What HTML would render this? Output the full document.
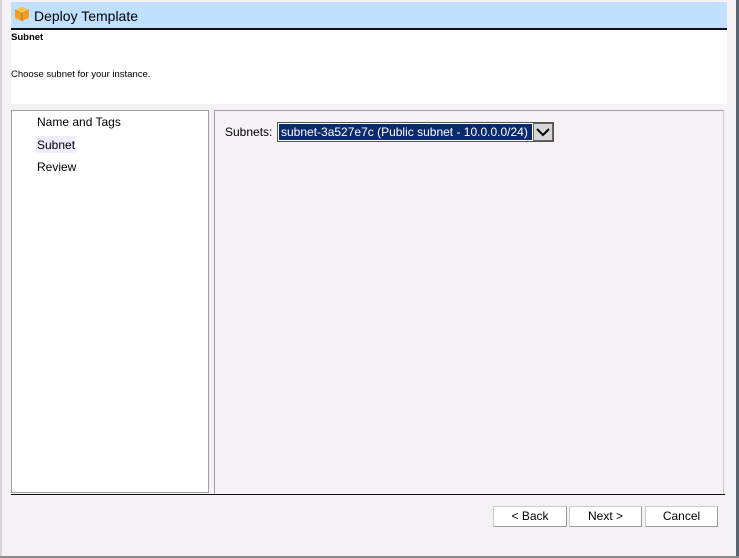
<!DOCTYPE html>
<html><head><style>
body{margin:0;width:739px;height:558px;background:#f5f1f5;position:relative;overflow:hidden;font-family:"Segoe UI","Liberation Sans",sans-serif;font-size:12px;color:#000}
div{position:absolute;box-sizing:border-box}
</style></head><body>
<div style="left:0;top:0;width:2px;height:558px;background:#d8d5d8"></div>
<div style="left:736px;top:0;width:3px;height:558px;background:#5a6470"></div>
<div style="left:0;top:556px;width:739px;height:2px;background:#8a8a8a"></div>
<div style="left:11px;top:2px;width:716px;height:27px;background:#bfe0fe"></div>
<div style="left:11px;top:28px;width:716px;height:2px;background:#111"></div>
<div style="left:11px;top:30px;width:716px;height:74px;background:#fff"></div>
<svg style="position:absolute;left:14px;top:6px" width="16" height="16" viewBox="0 0 16 16"><path d="M8 1L15 4V12L8 15L1 12V4Z" fill="#f0a020"/><path d="M1 4L8 7L15 4" fill="none" stroke="#c07010"/><path d="M8 7V15" stroke="#c07010"/><path d="M1 4L8 1L15 4L8 7Z" fill="#f8c050"/></svg>
<div style="left:34px;top:7px;font-size:14px;line-height:18px">Deploy Template</div>
<div style="left:11px;top:31px;font-size:9.5px;font-weight:bold;line-height:13px">Subnet</div>
<div style="left:11px;top:68px;font-size:9.5px;line-height:13px">Choose subnet for your instance.</div>
<div style="left:11px;top:110px;width:198px;height:383px;background:#fff;border:1px solid #a0a0a0"></div>
<div style="left:37px;top:114px;line-height:16px">Name and Tags</div>
<div style="left:36px;top:136px;width:39px;height:17px;background:#eeedfc"></div>
<div style="left:37px;top:137px;line-height:16px">Subnet</div>
<div style="left:37px;top:159px;line-height:16px">Review</div>
<div style="left:214px;top:110px;width:510px;height:385px;border:1px solid #a0a0a0;border-right-color:#ccc;border-bottom:none"></div>
<div style="left:225px;top:124px;line-height:16px">Subnets:</div>
<div style="left:277px;top:122px;width:277px;height:20px;border:1px solid #555;background:#fff"></div>
<div style="left:279px;top:124px;width:253px;height:16px;background:#0a2a6e;color:#fff;line-height:16px;padding-left:2px;white-space:nowrap">subnet-3a527e7c (Public subnet - 10.0.0.0/24)</div>
<div style="left:533px;top:123px;width:20px;height:18px;background:#d6d6d6;border:1px solid #666"></div>
<svg style="position:absolute;left:536px;top:127px" width="14" height="10"><path d="M1 2L7 8L13 2" fill="none" stroke="#000" stroke-width="2"/></svg>
<div style="left:11px;top:494px;width:714px;height:1px;background:#111"></div>
<div style="left:493px;top:506px;width:74px;height:21px;background:#fff;border:1px solid #ccc;border-right-color:#999;border-bottom-color:#999;text-align:center;line-height:19px">&lt; Back</div>
<div style="left:569px;top:506px;width:73px;height:21px;background:#fff;border:1px solid #ccc;border-right-color:#999;border-bottom-color:#999;text-align:center;line-height:19px">Next &gt;</div>
<div style="left:645px;top:506px;width:73px;height:21px;background:#fff;border:1px solid #ccc;border-right-color:#999;border-bottom-color:#999;text-align:center;line-height:19px">Cancel</div>
</body></html>
